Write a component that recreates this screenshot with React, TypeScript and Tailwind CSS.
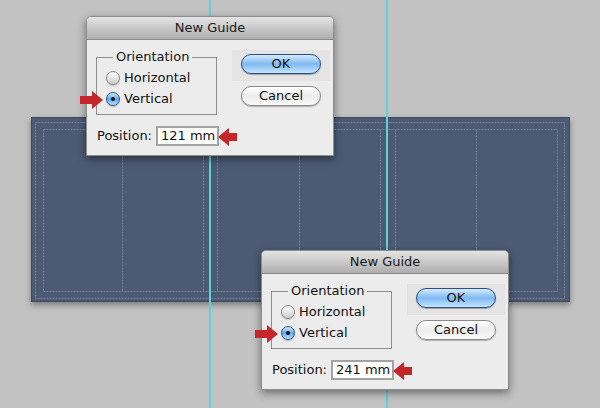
import React from 'react';

function Arrow({ dir, className }: { dir: 'left' | 'right'; className: string }) {
  // red annotation arrow laid over the dialog
  if (dir === 'right') {
    return (
      <svg className={className} width="23" height="18" viewBox="0 0 23 18">
        <polygon points="0,5 12,5 12,0 23,9 12,18 12,13 0,13" fill="#c4262c" />
      </svg>
    );
  }
  return (
    <svg className={className} width="19" height="18" viewBox="0 0 19 18">
      <polygon points="19,5 11,5 11,0 0,9 11,18 11,13 19,13" fill="#c4262c" />
    </svg>
  );
}

function Radio({ label, checked }: { label: string; checked?: boolean }) {
  return (
    <div className="flex items-center h-[21px] gap-1">
      {checked ? (
        <span className="w-[14px] h-[14px] rounded-full border border-[#35568a] bg-linear-to-b from-[#d3e9fd] via-[#5ea6ec] to-[#b9dfff] flex items-center justify-center shadow-[0_1px_1px_rgba(0,0,0,0.25)]">
          <span className="w-[4px] h-[4px] rounded-full bg-[#111]" />
        </span>
      ) : (
        <span className="w-[14px] h-[14px] rounded-full border border-[#8a8a8a] bg-linear-to-b from-[#fdfdfd] via-[#e6e6e6] to-[#c9c9c9] shadow-[0_1px_1px_rgba(0,0,0,0.2)]" />
      )}
      <span className="text-[13px] leading-none text-[#111]">{label}</span>
    </div>
  );
}

function NewGuide({ pos, value }: { pos: string; value: string }) {
  return (
    <div className={`absolute ${pos} w-[248px] h-[140px] flex flex-col rounded-t-[5px] bg-[#ececec] border border-[#8d8d8d] shadow-[0_3px_8px_rgba(0,0,0,0.45)]`}>
      <div className="h-[23px] shrink-0 rounded-t-[4px] bg-linear-to-b from-[#e4e4e4] to-[#aeaeae] border-b border-[#8a8a8a] flex items-center justify-center text-[13px] text-[#1a1a1a]">
        New Guide
      </div>
      <div className="flex pt-[9px] pl-[9px]">
        <div className="flex flex-col">
          <fieldset className="w-[121px] h-[66px] border border-[#8f8f8f] pl-[9px] pb-[5px]">
            <legend className="ml-[7px] px-[3px] text-[13px] leading-4 text-[#111]">Orientation</legend>
            <div className="pt-[2px]">
              <Radio label="Horizontal" />
              <Radio label="Vertical" checked />
            </div>
          </fieldset>
          <div className="flex items-center mt-[11px] pl-[1px] gap-[4px]">
            <span className="text-[13px] text-[#111]">Position:</span>
            <div className="w-[63px] h-[20px] bg-white border-2 border-[#a3a3a3] flex items-center pl-[3px] text-[13px] text-[#111]">
              {value}
            </div>
          </div>
        </div>
        <div className="ml-[13px] mt-[1px] flex flex-col">
          <div className="w-[98px] h-[31px] bg-[#e4e4e4] pt-[4px] pl-[9px]">
            <div className="w-[80px] h-[20px] rounded-full border border-[#2f4c85] bg-linear-to-b from-[#d5ebfd] via-[#7eb9f1] to-[#c4e5ff] flex items-center justify-center text-[13px] text-[#111] shadow-[0_1px_1px_rgba(0,0,0,0.3)]">
              OK
            </div>
          </div>
          <div className="mt-[5px] ml-[9px] w-[80px] h-[20px] rounded-full border border-[#8a8a8a] bg-linear-to-b from-[#ffffff] via-[#ececec] to-[#fafafa] flex items-center justify-center text-[13px] text-[#111] shadow-[0_1px_1px_rgba(0,0,0,0.25)]">
            Cancel
          </div>
        </div>
      </div>
      <Arrow dir="right" className="absolute left-[-7px] top-[74px]" />
      <Arrow dir="left" className="absolute left-[131px] top-[111px]" />
    </div>
  );
}

const columns = [91, 172, 186, 268, 349, 364, 445];

export default function App() {
  return (
    <div className="relative w-[600px] h-[408px] overflow-hidden bg-[#c2c2c2] pt-[117px] pl-[31px] font-['DejaVu_Sans',sans-serif]">
      {/* document page with its margin guides */}
      <div className="w-[539px] h-[185px] bg-[#4c5a74] border border-[#3d4960] shadow-[0_3px_6px_rgba(0,0,0,0.35)]">
        <svg width="537" height="183" viewBox="1 1 537 183">
          <g stroke="#74829c" strokeWidth="1" strokeDasharray="2 1" fill="none">
            <rect x="4.5" y="5.5" width="529" height="176" />
            <rect x="12.5" y="12.5" width="514" height="162" />
            {columns.map((c) => (
              <line key={c} x1={c + 0.5} y1="12.5" x2={c + 0.5} y2="174.5" />
            ))}
          </g>
        </svg>
      </div>

      {/* vertical guides */}
      <div className="absolute left-[209px] top-0 w-[2px] h-full bg-[#5fd2d8]" />
      <div className="absolute left-[386px] top-0 w-[2px] h-full bg-[#5fd2d8]" />

      <NewGuide pos="left-[86px] top-[16px]" value="121 mm" />
      <NewGuide pos="left-[261px] top-[250px]" value="241 mm" />
    </div>
  );
}
